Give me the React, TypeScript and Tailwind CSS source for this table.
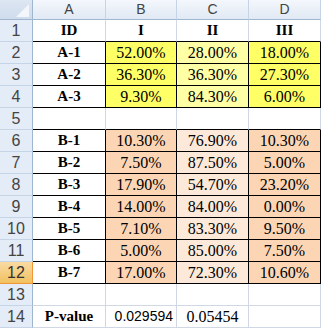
import React from "react";

type Kind = "head" | "y" | "o" | "blank" | "p";
type Row = { n: number; a: string; b: string; c: string; d: string; kind: Kind };

const rows: Row[] = [
  { n: 1, a: "ID", b: "I", c: "II", d: "III", kind: "head" },
  { n: 2, a: "A-1", b: "52.00%", c: "28.00%", d: "18.00%", kind: "y" },
  { n: 3, a: "A-2", b: "36.30%", c: "36.30%", d: "27.30%", kind: "y" },
  { n: 4, a: "A-3", b: "9.30%", c: "84.30%", d: "6.00%", kind: "y" },
  { n: 5, a: "", b: "", c: "", d: "", kind: "blank" },
  { n: 6, a: "B-1", b: "10.30%", c: "76.90%", d: "10.30%", kind: "o" },
  { n: 7, a: "B-2", b: "7.50%", c: "87.50%", d: "5.00%", kind: "o" },
  { n: 8, a: "B-3", b: "17.90%", c: "54.70%", d: "23.20%", kind: "o" },
  { n: 9, a: "B-4", b: "14.00%", c: "84.00%", d: "0.00%", kind: "o" },
  { n: 10, a: "B-5", b: "7.10%", c: "83.30%", d: "9.50%", kind: "o" },
  { n: 11, a: "B-6", b: "5.00%", c: "85.00%", d: "7.50%", kind: "o" },
  { n: 12, a: "B-7", b: "17.00%", c: "72.30%", d: "10.60%", kind: "o" },
  { n: 13, a: "", b: "", c: "", d: "", kind: "blank" },
  { n: 14, a: "P-value", b: "0.029594", c: "0.05454", d: "", kind: "p" },
];

const serif = "font-['Liberation_Serif',serif]";
const sans = "font-['Liberation_Sans',Arial,sans-serif]";

function ColHead({ label }: { label: string }) {
  return (
    <div
      className={`h-[20px] flex items-center justify-center border-r border-b border-r-[#c5d4e6] border-b-[#9eb6ce] bg-gradient-to-b from-[#f4f7fc] to-[#e1e9f4] text-[14px] text-[#444] ${sans}`}
    >
      {label}
    </div>
  );
}

export default function App() {
  return (
    <div className="w-[321px] h-[329px] bg-white overflow-hidden">
      <div className="grid grid-cols-[33px_73px_71px_72px_72px]">
        <div className="h-[20px] relative border-r border-b border-[#9eb6ce] bg-gradient-to-b from-[#dde6f2] to-[#cfdcec]">
          <svg className="absolute left-0 top-0" width="32" height="19" viewBox="0 0 32 19">
            <polygon points="29,4 29,17 16,17" fill="#f3f6fa" />
          </svg>
        </div>
        <ColHead label="A" />
        <ColHead label="B" />
        <ColHead label="C" />
        <ColHead label="D" />

        {rows.map((r) => {
          const sel = r.n === 12;
          const boxed = r.kind === "y" || r.kind === "o";
          const topOfBox = r.n === 1 || r.n === 5;
          const rowHead = sel
            ? "bg-gradient-to-b from-[#f9dba2] to-[#f1c15f] border-r-[#f29536] border-b-[#f29536] text-[#333]"
            : "bg-[#e4ecf7] border-r-[#9eb6ce] border-b-[#c5d4e6] text-[#444]";
          const cellBorder = boxed
            ? "border-r border-b border-r-black border-b-black"
            : topOfBox
            ? "border-r border-b border-r-[#d0d7e5] border-b-black"
            : "border-r border-b border-r-[#d0d7e5] border-b-[#d0d7e5]";
          const bgB = r.kind === "y" ? "bg-[#ffff66]" : r.kind === "o" ? "bg-[#fcd5b4]" : "bg-white";
          const bgC = r.kind === "y" ? "bg-[#ffffa6]" : r.kind === "o" ? "bg-[#fde9d9]" : "bg-white";
          const bgD = bgB;
          const numCls = `${serif} text-[16px] text-black pt-[1px]`;
          return (
            <React.Fragment key={r.n}>
              <div
                className={`h-[22px] flex items-center justify-center border-r border-b text-[16px] ${sans} ${rowHead}`}
              >
                {r.n}
              </div>
              <div
                className={`h-[22px] flex items-center justify-center bg-white font-bold text-[15px] text-black ${serif} ${cellBorder}`}
              >
                {r.a}
              </div>
              {r.kind === "head" ? (
                <>
                  <div className={`h-[22px] flex items-center justify-center font-bold text-[15px] text-black ${serif} ${cellBorder}`}>{r.b}</div>
                  <div className={`h-[22px] flex items-center justify-center font-bold text-[15px] text-black ${serif} ${cellBorder}`}>{r.c}</div>
                  <div className={`h-[22px] flex items-center justify-center font-bold text-[15px] text-black ${serif} ${cellBorder}`}>{r.d}</div>
                </>
              ) : r.kind === "p" ? (
                <>
                  <div className={`h-[22px] flex items-center justify-end pr-[3px] text-[14px] text-black ${sans} ${cellBorder}`}>{r.b}</div>
                  <div className={`h-[22px] flex items-center justify-center ${numCls} ${cellBorder}`}>{r.c}</div>
                  <div className={`h-[22px] ${cellBorder}`}></div>
                </>
              ) : (
                <>
                  <div className={`h-[22px] flex items-center justify-center ${numCls} ${bgB} ${cellBorder}`}>{r.b}</div>
                  <div className={`h-[22px] flex items-center justify-center ${numCls} ${bgC} ${cellBorder}`}>{r.c}</div>
                  <div className={`h-[22px] flex items-center justify-center ${numCls} ${bgD} ${cellBorder}`}>{r.d}</div>
                </>
              )}
            </React.Fragment>
          );
        })}
      </div>
    </div>
  );
}
